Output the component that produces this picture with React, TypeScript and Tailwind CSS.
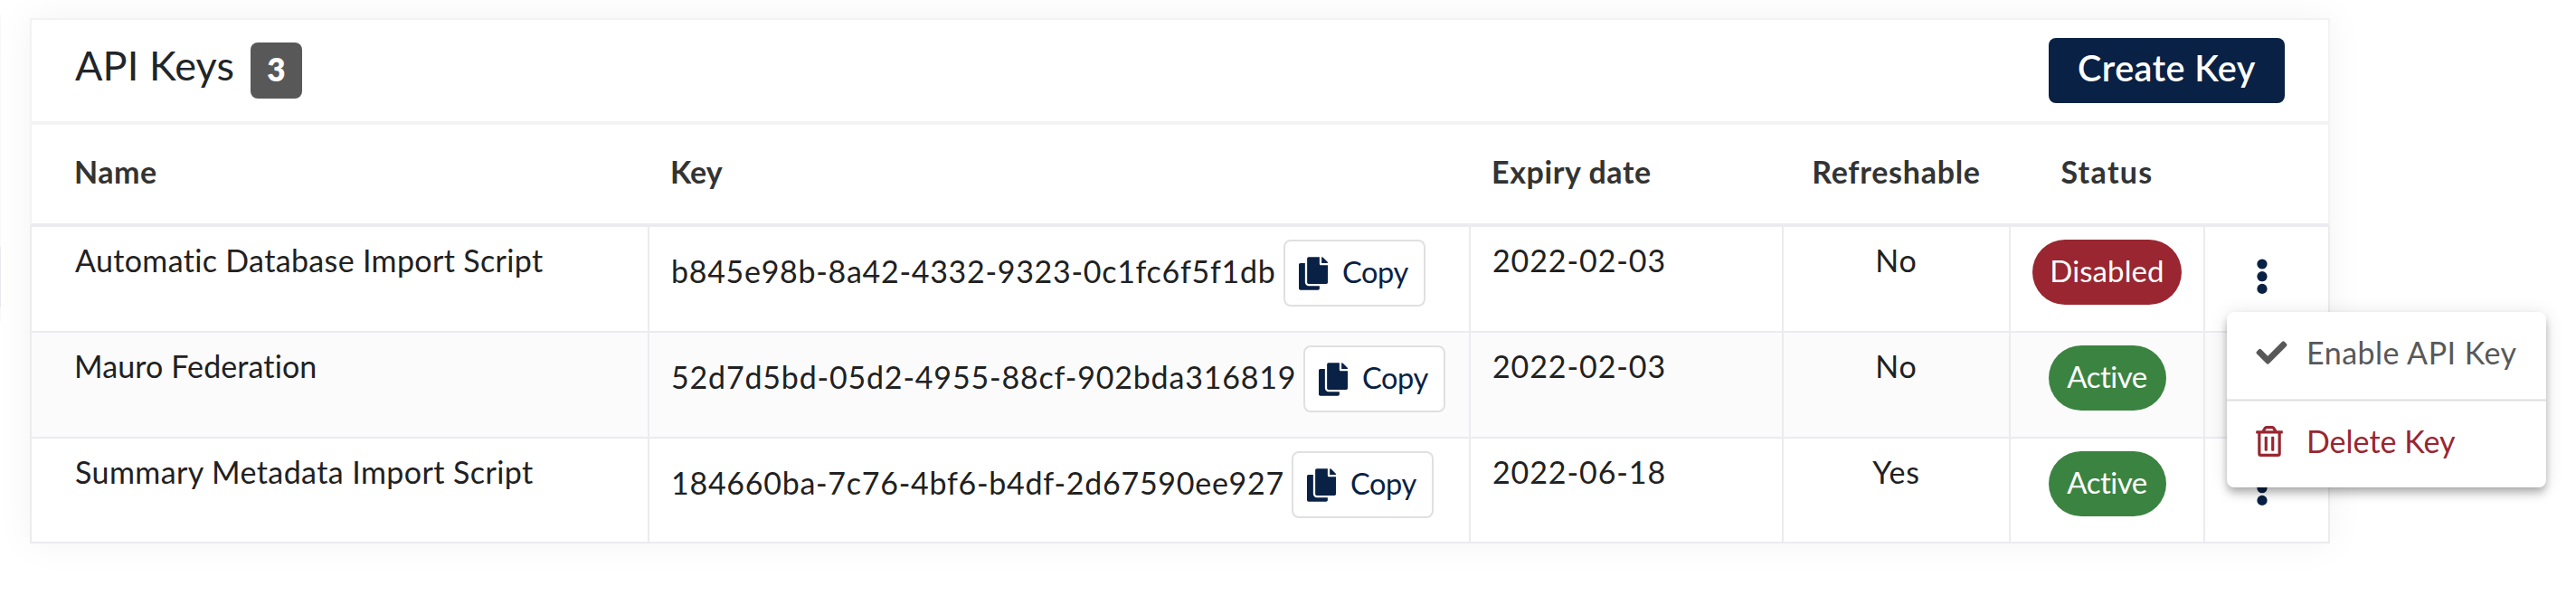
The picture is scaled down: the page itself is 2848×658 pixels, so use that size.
import { FaCheck, FaCopy, FaRegTrashAlt } from 'react-icons/fa';

type ApiKey = {
  name: string;
  nameClass: string;
  value: string;
  valueClass: string;
  expiry: string;
  refreshable: string;
  active: boolean;
  rowClass: string;
};

const columns =
  'grid grid-cols-[683px_908px_346px_251px_215px_136px]';

const keys: ApiKey[] = [
  {
    name: 'Automatic Database Import Script',
    nameClass: 'pl-[48px] tracking-[0.35px]',
    value: 'b845e98b-8a42-4332-9323-0c1fc6f5f1db',
    valueClass: 'w-[677px] tracking-[0.7px]',
    expiry: '2022-02-03',
    refreshable: 'No',
    active: false,
    rowClass: 'h-[117px] bg-white',
  },
  {
    name: 'Mauro Federation',
    nameClass: 'pl-[47px] tracking-[0.11px]',
    value: '52d7d5bd-05d2-4955-88cf-902bda316819',
    valueClass: 'w-[699px] tracking-[0.81px]',
    expiry: '2022-02-03',
    refreshable: 'No',
    active: true,
    rowClass: 'h-[117px] bg-[#fbfbfc]',
  },
  {
    name: 'Summary Metadata Import Script',
    nameClass: 'pl-[48px] tracking-[0.42px]',
    value: '184660ba-7c76-4bf6-b4df-2d67590ee927',
    valueClass: 'w-[686px] tracking-[0.72px]',
    expiry: '2022-06-18',
    refreshable: 'Yes',
    active: true,
    rowClass: 'h-[116px] bg-white',
  },
];

function CopyButton() {
  return (
    <button className="flex h-[74px] w-[157px] shrink-0 items-center rounded-lg border-2 border-[#e0e0e0] bg-white pl-[15px] text-[#092144]">
      <FaCopy className="h-[37px] w-[32px]" />
      <span className="pb-[3px] pl-[16px] text-[32.5px] leading-[50px] tracking-[-0.4px]">Copy</span>
    </button>
  );
}

function StatusPill({ active }: { active: boolean }) {
  return active ? (
    <span className="flex h-[72px] w-[130px] items-center justify-center rounded-full bg-[#3b8341] pb-[5px] text-[33px] leading-[50px] tracking-[-0.5px] text-white">
      Active
    </span>
  ) : (
    <span className="flex h-[72px] w-[165px] items-center justify-center rounded-full bg-[#992630] pb-[5px] text-[33px] leading-[50px] tracking-[0.1px] text-white">
      Disabled
    </span>
  );
}

function MoreIcon() {
  return (
    <svg width="12" height="40" viewBox="0 0 12 40" fill="#092144">
      <circle cx="6" cy="6" r="5.6" />
      <circle cx="6" cy="19.7" r="5.6" />
      <circle cx="6" cy="33.4" r="5.6" />
    </svg>
  );
}

function Row({ item }: { item: ApiKey }) {
  const cell = 'border-r-2 border-[#ebebf0]';
  return (
    <div className={`${columns} ${item.rowClass} border-x-2 border-b-2 border-[#ebebf0] text-[34px] leading-[50px] text-[#212121]`}>
      <div className={`${cell} ${item.nameClass} pt-3 whitespace-nowrap`}>{item.name}</div>
      <div className={`${cell} flex items-start pt-[14px] pl-6`}>
        <div className="flex h-[74px] items-center">
          <span className={`${item.valueClass} shrink-0 pb-1 whitespace-nowrap`}>{item.value}</span>
          <CopyButton />
        </div>
      </div>
      <div className={`${cell} pt-3 pl-6 tracking-[0.9px]`}>{item.expiry}</div>
      <div className={`${cell} pt-3 text-center tracking-[0.8px]`}>{item.refreshable}</div>
      <div className={`${cell} flex items-start justify-center pt-[14px]`}>
        <StatusPill active={item.active} />
      </div>
      <div className="pt-[35px] pl-[57px]">
        <MoreIcon />
      </div>
    </div>
  );
}

function ActionMenu() {
  return (
    <div className="absolute top-[345px] left-[2462px] h-[194px] w-[353px] rounded-lg bg-white text-[34px] leading-[50px] shadow-[0_4px_8px_-2px_rgba(0,0,0,0.2),0_8px_10px_0_rgba(0,0,0,0.14),0_2px_20px_0_rgba(0,0,0,0.12)]">
      <div className="flex h-24 items-center pb-[6px] pl-8 text-[#585858]">
        <FaCheck className="h-[34px] w-[35px]" />
        <span className="pl-[21px] tracking-[0.5px] whitespace-nowrap">Enable API Key</span>
      </div>
      <div className="h-[3px] border-t border-b border-[#eeeeee] bg-[#dcdcdc]" />
      <div className="flex h-[95px] items-center pb-[7px] pl-8 text-[#992630]">
        <FaRegTrashAlt className="h-[34px] w-[30px]" />
        <span className="pl-[26px] whitespace-nowrap">Delete Key</span>
      </div>
    </div>
  );
}

export default function App() {
  return (
    <div className="relative h-[658px] w-[2848px] overflow-hidden bg-white pt-5 pl-[33px] font-['Lato','Noto_Sans',sans-serif]">
      <div className="absolute top-4 left-0 h-[339px] w-px bg-[#f8f8f8]" />
      <div className="absolute top-[273px] left-0 h-[67px] w-px bg-[#e9e9f2]" />

      <section className="w-[2543px] bg-white shadow-[0_0_40px_rgba(0,0,0,0.05)]">
        <header className="flex h-[118px] items-center justify-between border-2 border-b-4 border-[#f3f3f3] pr-12 pl-[48px]">
          <div className="flex items-center">
            <h1 className="w-[194px] pb-3 text-[45px] leading-[60px] tracking-[0.1px] whitespace-nowrap text-[#212529]">API Keys</h1>
            <span className="flex h-[62px] w-[57px] items-center justify-center rounded-lg bg-[#585858] pb-1 text-[35px] leading-[50px] font-extrabold text-white">
              3
            </span>
          </div>
          <button className="flex h-[72px] w-[261px] items-center justify-center rounded-lg bg-[#092144] pb-[6px] text-[39.6px] leading-[50px] font-semibold tracking-[0.45px] text-white">
            Create Key
          </button>
        </header>

        <div className={`${columns} h-[113px] items-center border-x-2 border-b-4 border-x-[#f3f3f3] border-b-[#ebebf0] pb-[5px] text-[34px] leading-[50px] font-bold text-[#333333]`}>
          <div className="pl-[47px] tracking-[0.5px]">Name</div>
          <div className="pl-[23px]">Key</div>
          <div className="pl-[23px] tracking-[0.6px]">Expiry date</div>
          <div className="pr-[2px] text-center tracking-[0.73px]">Refreshable</div>
          <div className="pr-[2px] text-center tracking-[1.3px]">Status</div>
          <div />
        </div>

        {keys.map((item) => (
          <Row key={item.value} item={item} />
        ))}
      </section>

      <ActionMenu />
    </div>
  );
}
